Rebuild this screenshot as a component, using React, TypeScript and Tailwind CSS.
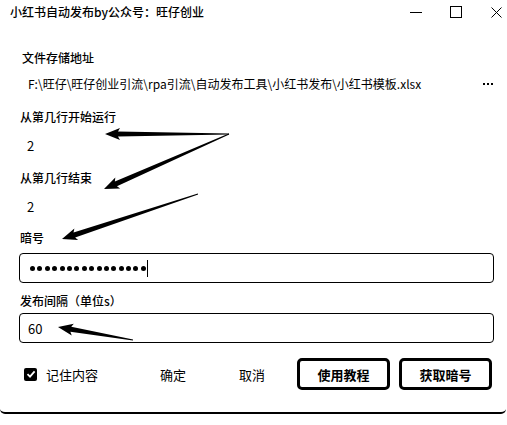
import React from "react";

type Pt = [number, number];

// 画一个由细到粗的手绘箭头
function arrowPoints(tail: Pt, tip: Pt, head = 13, halfHead = 6, tailW = 0.5, baseW = 2.6) {
  const dx = tip[0] - tail[0];
  const dy = tip[1] - tail[1];
  const len = Math.hypot(dx, dy);
  const ux = dx / len;
  const uy = dy / len;
  const nx = -uy;
  const ny = ux;
  const bx = tip[0] - ux * head;
  const by = tip[1] - uy * head;
  const pts: Pt[] = [
    [tail[0] + nx * tailW, tail[1] + ny * tailW],
    [bx + nx * baseW, by + ny * baseW],
    [bx + nx * halfHead - ux * 2, by + ny * halfHead - uy * 2],
    [tip[0], tip[1]],
    [bx - nx * halfHead - ux * 2, by - ny * halfHead - uy * 2],
    [bx - nx * baseW, by - ny * baseW],
    [tail[0] - nx * tailW, tail[1] - ny * tailW],
  ];
  return pts.map((p) => p.join(",")).join(" ");
}

const arrows: [Pt, Pt][] = [
  [[229, 134], [105, 134]],
  [[229, 134], [104, 189]],
  [[198, 194], [62, 239]],
  [[133, 340], [58, 327]],
];

function Label({ children, pl = "pl-0" }: { children: React.ReactNode; pl?: string }) {
  return <div className={`h-[20px] flex items-center text-[12px] leading-none font-medium ${pl}`}>{children}</div>;
}

export default function App() {
  const font = { fontFamily: '"Noto Sans CJK SC", "Noto Sans", sans-serif' };
  return (
    <div className="relative w-[507px] h-[425px] bg-white text-black overflow-hidden" style={font}>
      <div className="w-[506px] h-[414px] border-b-2 border-black rounded-b-[5px] flex flex-col">
        {/* 标题栏 */}
        <div className="h-[24px] flex items-center pl-[10px]">
          <span className="text-[12px] leading-none font-medium">小红书自动发布by公众号：旺仔创业</span>
          <div className="ml-auto flex items-center h-full">
            <svg width="12" height="12" className="mr-[28px]" viewBox="0 0 12 12">
              <line x1="0" y1="6.5" x2="12" y2="6.5" stroke="black" strokeWidth="1" />
            </svg>
            <svg width="12" height="12" className="mr-[29px]" viewBox="0 0 12 12">
              <rect x="0.5" y="0.5" width="11" height="11" fill="none" stroke="black" strokeWidth="1" />
            </svg>
            <svg width="11" height="11" className="mr-[4px]" viewBox="0 0 11 11">
              <path d="M0.5 0.5 L10.5 10.5 M10.5 0.5 L0.5 10.5" stroke="black" strokeWidth="1" />
            </svg>
          </div>
        </div>

        <div className="pl-[20px] pr-[12px] flex flex-col">
          <div className="mt-[24px]">
            <Label pl="pl-[2px]">文件存储地址</Label>
          </div>
          <div className="mt-[6px] h-[20px] flex items-center pl-[8px] text-[12px] leading-none">
            <span>F:\旺仔\旺仔创业引流\rpa引流\自动发布工具\小红书发布\小红书模板.xlsx</span>
            <span className="ml-auto mr-[1px] flex gap-[2px]">
              <span className="block w-[2px] h-[2px] bg-black" />
              <span className="block w-[2px] h-[2px] bg-black" />
              <span className="block w-[2px] h-[2px] bg-black" />
            </span>
          </div>

          <div className="mt-[13px]">
            <Label>从第几行开始运行</Label>
          </div>
          <div className="mt-[8px]">
            <Label pl="pl-[7px]">
              <span className="text-[13px] font-normal">2</span>
            </Label>
          </div>
          <div className="mt-[13px]">
            <Label>从第几行结束</Label>
          </div>
          <div className="mt-[8px]">
            <Label pl="pl-[7px]">
              <span className="text-[13px] font-normal">2</span>
            </Label>
          </div>
          <div className="mt-[12px]">
            <Label>暗号</Label>
          </div>

          <div className="mt-[5px] h-[30px] ml-[-1px] border border-black rounded-[4px] flex items-center pl-[10px]">
            <div className="flex items-center gap-[2.4px]">
              {Array.from({ length: 16 }).map((_, i) => (
                <span key={i} className="block w-[5px] h-[5px] rounded-full bg-black" />
              ))}
            </div>
            <span className="block w-[1px] h-[17px] bg-black ml-[1px]" />
          </div>

          <div className="mt-[8px]">
            <Label pl="pl-0">发布间隔（单位s）</Label>
          </div>
          <div className="mt-[2px] h-[30px] ml-[-1px] border border-black rounded-[4px] flex items-center pl-[8px] text-[13px] leading-none">
            60
          </div>
        </div>

        {/* 底部按钮 */}
        <div className="mt-[15px] h-[32px] flex items-center pl-[24px] text-[13px] leading-none">
          <span className="w-[13px] h-[13px] rounded-[2px] bg-black flex items-center justify-center">
            <svg width="10" height="10" viewBox="0 0 10 10">
              <path d="M1.5 5.2 L4 7.6 L8.6 2.4" fill="none" stroke="white" strokeWidth="1.8" />
            </svg>
          </span>
          <span className="ml-[9px]">记住内容</span>
          <span className="ml-[62px]">确定</span>
          <span className="ml-[53px]">取消</span>
          <button className="ml-[32px] w-[93px] h-[32px] border-[3px] border-black rounded-[5px] font-bold text-[13px]">
            使用教程
          </button>
          <button className="ml-[9px] w-[93px] h-[32px] border-[3px] border-black rounded-[5px] font-bold text-[13px]">
            获取暗号
          </button>
        </div>
      </div>

      {/* 手绘箭头标注 */}
      <svg className="absolute inset-0 pointer-events-none" width="507" height="425">
        {arrows.map(([a, b], i) => (
          <polygon key={i} points={arrowPoints(a, b)} fill="black" />
        ))}
      </svg>
    </div>
  );
}
